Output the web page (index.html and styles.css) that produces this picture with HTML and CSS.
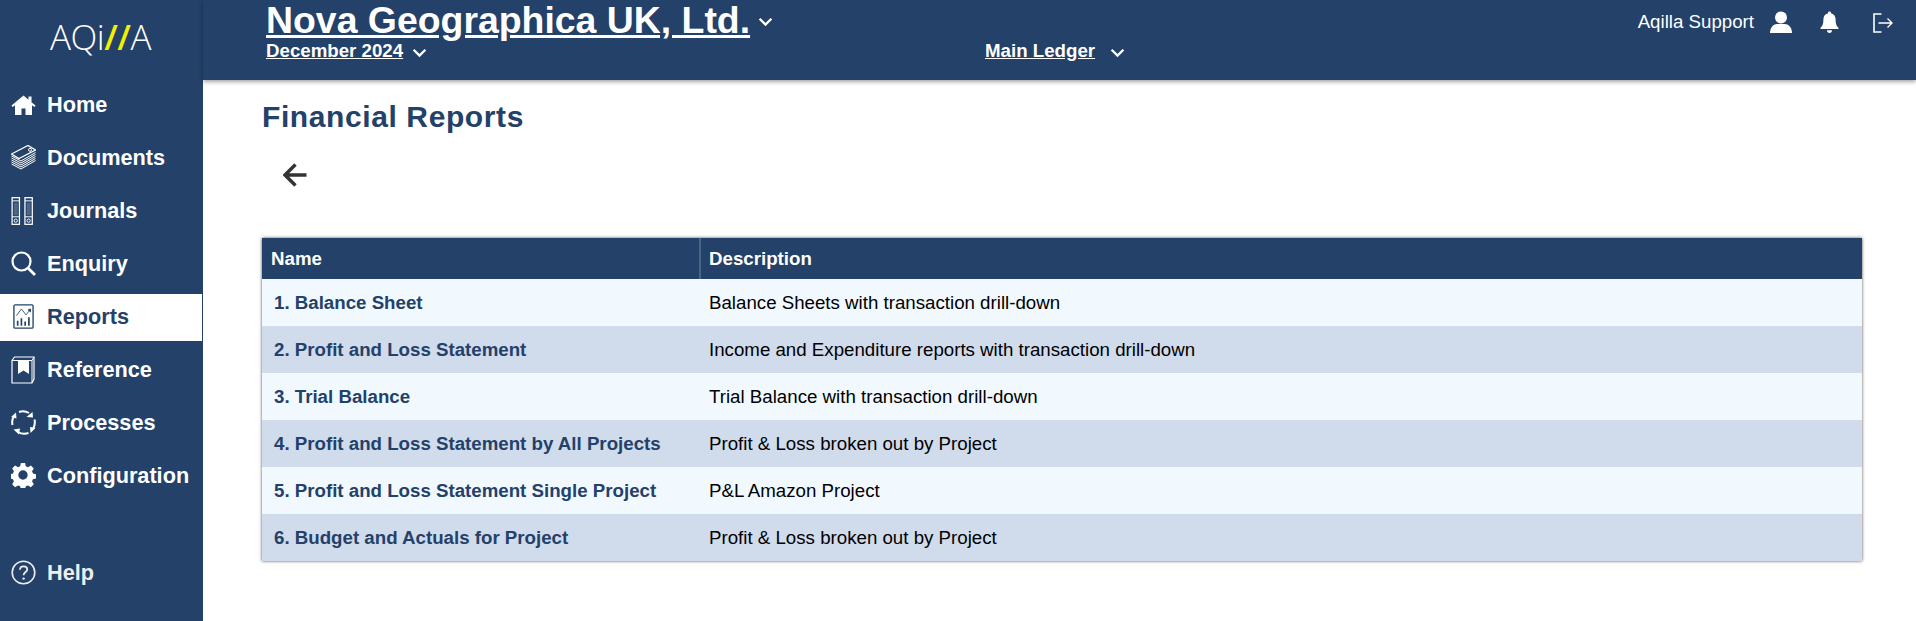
FILE: index.html
```html
<!DOCTYPE html>
<html lang="en">
<head>
    <meta charset="UTF-8">
    <meta name="viewport" content="width=device-width, initial-scale=1.0">
    <title>Financial Reports</title>
    <link rel="stylesheet" href="styles.css">
</head>
<body>
    <aside class="sidebar">
        <div class="logo">AQi<span class="logo-slash">//</span>A</div>
        <nav class="side-nav">
            <a class="side-item" href="#">
                <svg class="side-icon" viewBox="0 0 25 25"><path d="M12.500 3.500 0.500 13.500 1.600 15 4 13.200V23h6.500v-6.500h4V23H21V13.200L23.400 15 24.500 13.500 20.500 10.200V4.500h-3v3.200z" fill="#fff"/></svg>
                Home
            </a>
            <a class="side-item" href="#">
                <svg class="side-icon" viewBox="0 0 25 25" fill="none" stroke="#fff" stroke-width="1"><path d="M0.500 9 17 0.500 24.500 5 8 13.500z" stroke-width="1.300"/><circle cx="19" cy="4.800" r="1.500"/><path d="M0.500 11 10 16 24.500 7.500M0.500 13 10 18 24.500 9.500M0.500 15 10 20 24.500 11.500M0.500 17 10 22 24.500 13.500M0.500 19 10 24 24.500 15.500"/></svg>
                Documents
            </a>
            <a class="side-item" href="#">
                <svg class="side-icon side-icon-tall" viewBox="0 0 25 29" fill="none" stroke="#fff" stroke-width="1.300"><rect x="0.700" y="0.700" width="7.600" height="27.600"/><rect x="14" y="0.700" width="7.600" height="27.600"/><path d="M0.700 4H8.300M14 4H21.600M0.700 20.500H8.300M14 20.500H21.600" stroke-width="1"/><path d="M2.500 6H6.500V19H2.500zM15.800 6H19.800V19H15.800z" fill="#fff" fill-opacity="0.2" stroke="none"/><circle cx="4.500" cy="24.500" r="1.700" stroke-width="1"/><circle cx="17.800" cy="24.500" r="1.700" stroke-width="1"/></svg>
                Journals
            </a>
            <a class="side-item" href="#">
                <svg class="side-icon" viewBox="0 0 25 25" fill="none" stroke="#fff"><circle cx="10.500" cy="10.500" r="9" stroke-width="2.200"/><path d="M17 17 24 24" stroke-width="2.800"/></svg>
                Enquiry
            </a>
            <a class="side-item side-item-active" href="#">
                <svg class="side-icon" viewBox="0 0 25 30" fill="none" stroke="#234169"><rect x="1" y="1" width="23" height="28" rx="1.500" stroke-width="1.600"/><path d="M4 14 10 6 15.500 13 20 7.500" stroke-width="1"/><path d="M18 7 21 6 21 9.500z" fill="#234169"/><path d="M5.500 26V20M10 26V17M14.500 26V21M19 26V16" stroke-width="2"/></svg>
                Reports
            </a>
            <a class="side-item" href="#">
                <svg class="side-icon side-icon-tall" viewBox="0 0 25 28" fill="none" stroke="#fff"><path d="M1 4.500 3.500 1H23V23L21 27H1z" stroke-width="1.200"/><path d="M1 4.500H21V27M23 1 21 4.500" stroke-width="1"/><path d="M7 4.500H18V18L12.500 14.500 7 18z" fill="#fff" stroke="none"/></svg>
                Reference
            </a>
            <a class="side-item" href="#">
                <svg class="side-icon" viewBox="0 0 25 25" fill="none" stroke="#fff" stroke-width="2"><path d="M1.500 15C0.800 12 1.200 9 2.800 6.500M8 2C11.500 0.800 15 1.200 18 3M23.500 9.500C24.300 12.500 23.800 15.500 22.200 18.500M17.500 23C14 24.200 10 23.800 6.800 22"/><path d="M0 7 5 2.500 5.500 8.500zM15.500 7 21.500 2 22 7.500zM24.500 18 19.500 23 19 17zM2.500 19.500 9 18.500 8 24.500z" fill="#fff" stroke="none"/></svg>
                Processes
            </a>
            <a class="side-item" href="#">
                <svg class="side-icon" viewBox="0 0 24 24"><path d="M10 0.500h4l.7 3.200 2.100.9 2.800-1.700 2.800 2.800-1.700 2.800.9 2.100 3.200.7v4l-3.200.7-.9 2.100 1.700 2.800-2.800 2.800-2.800-1.700-2.100.9-.7 3.200h-4l-.7-3.200-2.100-.9-2.800 1.700-2.800-2.800 1.700-2.800-.9-2.100-3.200-.7v-4l3.200-.7.9-2.100-1.700-2.800 2.800-2.800 2.800 1.700 2.100-.9zM12 7.500a4.500 4.500 0 1 0 0 9 4.500 4.500 0 0 0 0-9z" fill="#fff" fill-rule="evenodd" transform="translate(-.5 -.5)"/></svg>
                Configuration
            </a>
            <a class="side-item side-item-help" href="#">
                <svg class="side-icon" viewBox="0 0 25 25" fill="none" stroke="#eee"><circle cx="12.500" cy="12.500" r="11.300" stroke-width="1.600"/><path d="M9 9.800C9 7.500 10.600 6.300 12.600 6.300 14.800 6.300 16.200 7.600 16.200 9.400 16.200 12 12.600 12.200 12.600 15.300" stroke-width="1.800"/><circle cx="12.600" cy="18.600" r="1.200" fill="#eee" stroke="none"/></svg>
                Help
            </a>
        </nav>
    </aside>

    <div class="main">
        <header class="topbar">
            <div class="titles">
                <div class="company">
                    <a href="#">Nova Geographica UK, Ltd.</a>
                    <svg class="chevron" viewBox="0 0 14 9"><path d="M1.500 1.500 7 7 12.500 1.500"/></svg>
                </div>
                <div class="sub-row">
                    <div class="period">
                        <a href="#">December 2024</a>
                        <svg class="chevron" viewBox="0 0 14 9"><path d="M1.500 1.500 7 7 12.500 1.500"/></svg>
                    </div>
                    <div class="ledger">
                        <a href="#">Main Ledger</a>
                        <svg class="chevron" viewBox="0 0 14 9"><path d="M1.500 1.500 7 7 12.500 1.500"/></svg>
                    </div>
                </div>
            </div>
            <div class="user-box">
                <span class="user-name">Aqilla Support</span>
                <svg class="user-icon" viewBox="0 0 22 22"><circle cx="11" cy="6.500" r="6" fill="#fff"/><path d="M0 22C0 16 4 13 7 13H15C18 13 22 16 22 22z" fill="#fff"/></svg>
                <svg class="bell-icon" viewBox="0 0 19 22"><path d="M9.500 0.500C8.500 0.500 8 1.200 8 2.200 4.800 3 3.400 5.500 3.400 8.500 3.400 13 2.400 15 0.500 16.800V18H18.500V16.800C16.600 15 15.600 13 15.600 8.500 15.600 5.500 14.200 3 11 2.200 11 1.200 10.500 0.500 9.500 0.500z" fill="#fff"/><path d="M7 19.300H12C12 21 11 22 9.500 22 8 22 7 21 7 19.300z" fill="#fff"/></svg>
                <svg class="logout-icon" viewBox="0 0 20 20" fill="none" stroke="#fff" stroke-width="1.600"><path d="M8.500 1H1V19H8.500"/><path d="M5.500 10H19M14.500 5.500 19 10 14.500 14.500" stroke-width="1.400"/></svg>
            </div>
        </header>

        <main class="content">
            <h1 class="page-title">Financial Reports</h1>
            <a class="back-link" href="#">
                <svg viewBox="0 0 24 24" fill="none" stroke="#333" stroke-width="3.400"><path d="M23.500 12H2.500M12.500 1.500 2 12 12.500 22.500"/></svg>
            </a>
            <table class="report-table">
                <thead>
                    <tr>
                        <th class="col-name">Name</th>
                        <th class="col-desc">Description</th>
                    </tr>
                </thead>
                <tbody>
                    <tr>
                        <td class="report-name">1. Balance Sheet</td>
                        <td>Balance Sheets with transaction drill-down</td>
                    </tr>
                    <tr>
                        <td class="report-name">2. Profit and Loss Statement</td>
                        <td>Income and Expenditure reports with transaction drill-down</td>
                    </tr>
                    <tr>
                        <td class="report-name">3. Trial Balance</td>
                        <td>Trial Balance with transaction drill-down</td>
                    </tr>
                    <tr>
                        <td class="report-name">4. Profit and Loss Statement by All Projects</td>
                        <td>Profit &amp; Loss broken out by Project</td>
                    </tr>
                    <tr>
                        <td class="report-name">5. Profit and Loss Statement Single Project</td>
                        <td>P&amp;L Amazon Project</td>
                    </tr>
                    <tr>
                        <td class="report-name">6. Budget and Actuals for Project</td>
                        <td>Profit &amp; Loss broken out by Project</td>
                    </tr>
                </tbody>
            </table>
        </main>
    </div>
</body>
</html>
```

FILE: styles.css
```css
body {
    font-family: "Liberation Sans", Arial, sans-serif;
    margin: 0;
    padding: 0;
    height: 621px;
    overflow: hidden;
    background: white;
    color: #000;
    display: flex;
}

a {
    color: inherit;
}

.sidebar {
    width: 203px;
    flex-shrink: 0;
    background-color: #234169;
    color: white;
}

.logo {
    height: 76px;
    padding-left: 50px;
    font-family: "Open Sans", sans-serif;
    font-weight: 300;
    font-size: 35px;
    line-height: 74px;
    letter-spacing: -0.5px;
}

.logo-slash {
    color: #f0f000;
    font-weight: 600;
}

.side-nav {
    display: flex;
    flex-direction: column;
    gap: 6px;
    padding-top: 6px;
}

.side-item {
    height: 47px;
    box-sizing: border-box;
    padding: 0 0 2px 11px;
    display: flex;
    align-items: center;
    gap: 11px;
    font-size: 21.7px;
    font-weight: bold;
    text-decoration: none;
    color: white;
}

.side-item-active {
    width: 202px;
    background: white;
    color: #234169;
}

.side-item-help {
    margin-top: 44px;
    color: #eee;
}

.side-icon {
    width: 25px;
    height: 25px;
    flex-shrink: 0;
}

.side-icon-tall {
    height: 28px;
}

.main {
    flex: 1;
    min-width: 0;
    display: flex;
    flex-direction: column;
}

.topbar {
    height: 80px;
    flex-shrink: 0;
    box-sizing: border-box;
    display: flex;
    justify-content: space-between;
    padding: 0 23px 0 63px;
    background-color: #234169;
    color: white;
    box-shadow: 0 2px 4px rgba(0, 0, 0, 0.35);
}

.titles {
    width: 900px;
}

.company {
    display: flex;
    align-items: center;
    gap: 8px;
    font-size: 37.4px;
    font-weight: bold;
    line-height: 40px;
    height: 39px;
}

.sub-row {
    display: flex;
    margin-top: 1px;
    font-size: 18.7px;
    font-weight: bold;
    line-height: 22px;
}

.period {
    width: 719px;
    display: flex;
    align-items: center;
    gap: 9px;
}

.ledger {
    display: flex;
    align-items: center;
    gap: 15px;
}

.chevron {
    width: 15px;
    height: 10px;
    fill: none;
    stroke: white;
    stroke-width: 2.2;
    margin-top: 4px;
}

.user-box {
    display: flex;
    align-items: flex-start;
    padding-top: 11px;
    font-size: 18.7px;
}

.user-name {
    line-height: 22px;
    margin-right: 16px;
}

.user-icon {
    width: 22px;
    height: 22px;
    margin-right: 28px;
}

.bell-icon {
    width: 19px;
    height: 22px;
    margin-right: 34px;
}

.logout-icon {
    width: 20px;
    height: 20px;
    margin-top: 2px;
}

.content {
    padding: 18px 54px 0 59px;
}

.page-title {
    margin: 0;
    color: #234169;
    font-size: 30px;
    line-height: 38px;
    letter-spacing: 0.6px;
}

.back-link {
    display: block;
    width: 24px;
    height: 24px;
    margin: 27px 0 0 21px;
}

.back-link svg {
    display: block;
    width: 24px;
    height: 24px;
}

.report-table {
    width: 100%;
    margin-top: 51px;
    border-collapse: collapse;
    table-layout: fixed;
    font-size: 18.7px;
    box-shadow: 0 0 3px rgba(0, 0, 0, 0.7);
}

.report-table th {
    height: 41px;
    padding: 0 9px;
    background-color: #234169;
    color: white;
    font-weight: bold;
    text-align: left;
}

.report-table .col-name {
    width: 419px;
    border-right: 2px solid #4a6486;
}

.report-table .col-desc {
    padding-left: 8px;
}

.report-table td {
    height: 47px;
    padding: 0 9px;
}

.report-table tbody tr:nth-child(odd) {
    background-color: #f1f9ff;
}

.report-table tbody tr:nth-child(even) {
    background-color: #d0dbec;
}

.report-table .report-name {
    padding-left: 12px;
    color: #234169;
    font-weight: bold;
}
```
